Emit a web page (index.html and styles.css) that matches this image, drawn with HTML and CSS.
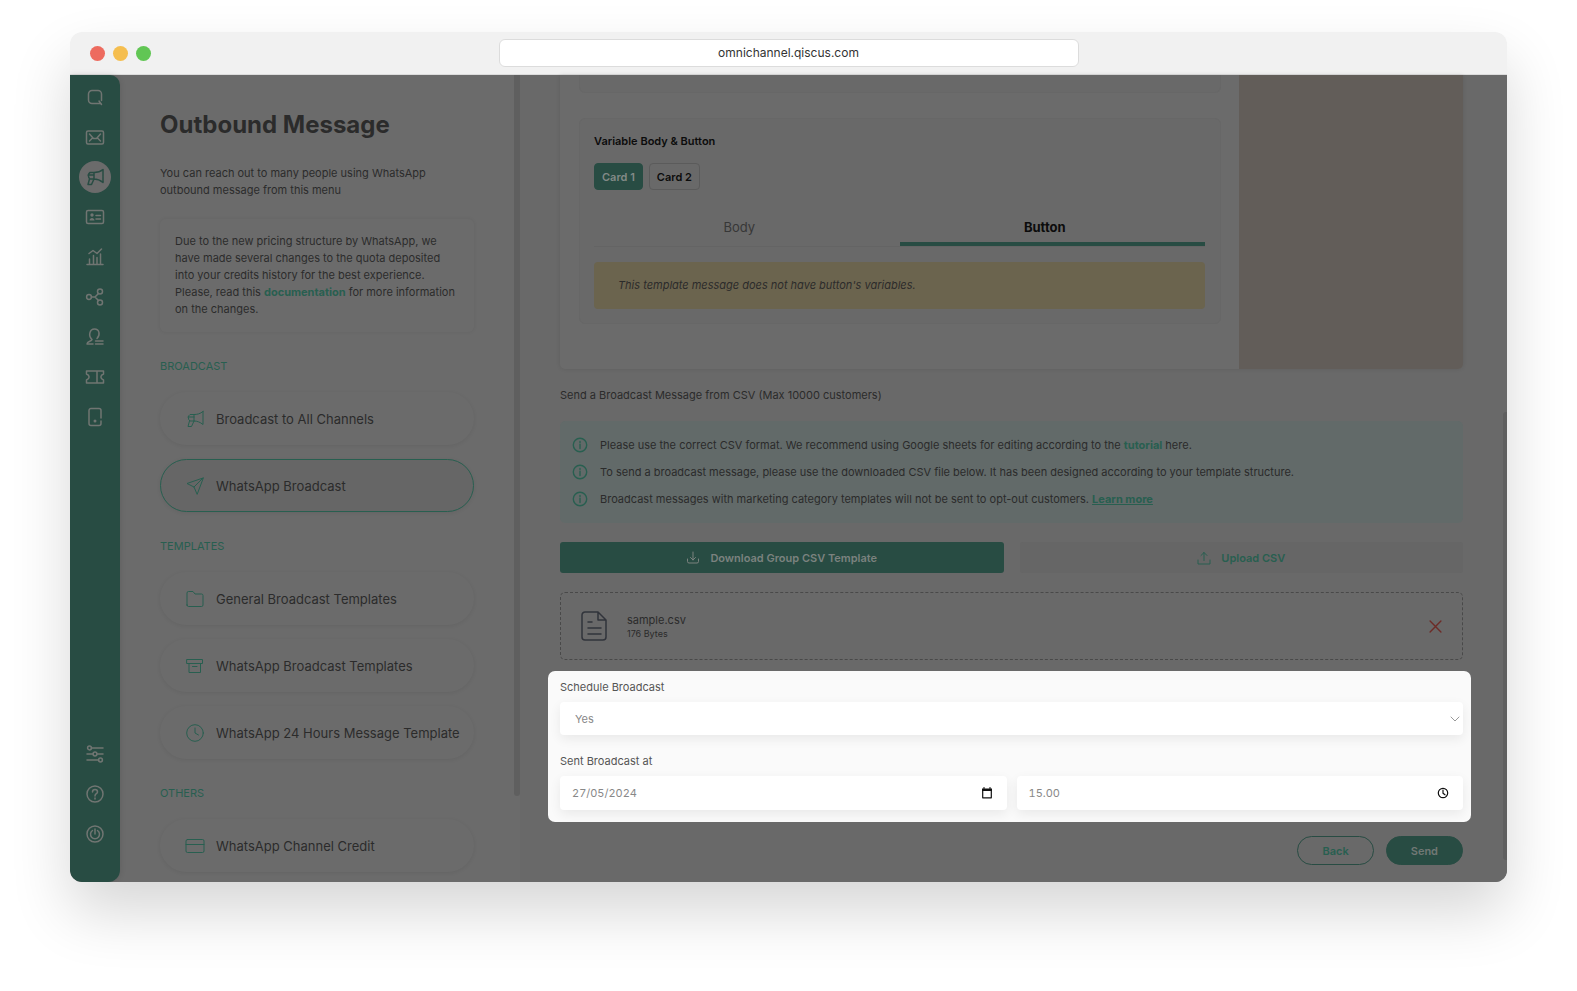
FILE: index.html
```html
<!DOCTYPE html>
<html lang="en">
<head>
    <meta charset="UTF-8">
    <meta name="viewport" content="width=device-width, initial-scale=1.0">
    <title>Outbound Message</title>
    <link rel="stylesheet" href="styles.css">
</head>
<body>
    <div class="window">
        <div class="titlebar">
            <div class="dots">
                <span class="dot red"></span>
                <span class="dot yellow"></span>
                <span class="dot green"></span>
            </div>
            <div class="address">omnichannel.qiscus.com</div>
        </div>

        <div class="app">
            <nav class="rail">
                <a href="#" aria-label="Home"><svg viewBox="0 0 20 20"><path d="M16 16.500H7A3.500 3.500 0 0 1 3.500 13V7A3.500 3.500 0 0 1 7 3.500H13A3.500 3.500 0 0 1 16.500 7V13.500M14 14L16.500 17.500"/></svg></a>
                <a href="#" aria-label="Inbox"><svg viewBox="0 0 20 20"><rect x="1.500" y="4" width="17" height="13" rx="1.500"/><path d="M4.500 7L8.500 11.500H11.500L15.500 7M4.500 14L7.500 11M15.500 14L12.500 11"/></svg></a>
                <a href="#" class="active" aria-label="Outbound message"><svg viewBox="0 0 20 20"><path d="M18 2.500V15.500C15 13 12 12 9 12H5A2.500 3.500 0 0 1 5 5.500H9C12 5.500 15 5 18 2.500ZM9 5.500V12M4.500 12L3 17.500H6.500L9 12M3 8H9"/></svg></a>
                <a href="#" aria-label="Contacts"><svg viewBox="0 0 20 20"><rect x="1.500" y="3.500" width="17" height="13" rx="1.500"/><path d="M11 8.500H15.500M11 12H15.500"/><circle class="solid" cx="7" cy="8" r="1.700"/><path class="solid" d="M4.500 13.500C4.500 10 9.500 10 9.500 13.500Z"/></svg></a>
                <a href="#" aria-label="Analytics"><svg viewBox="0 0 20 20"><path d="M2 17.500H18M4.500 17V12M8.500 17V8.500M12 17V10.500M15.500 17V7M4 6.500L8 3.500L12 6.500L16.500 2"/></svg></a>
                <a href="#" aria-label="Integration"><svg viewBox="0 0 20 20"><circle cx="4" cy="10" r="2.400"/><circle cx="15" cy="4.500" r="2.500"/><circle cx="15" cy="15.500" r="2.500"/><path d="M6.500 10H10L13.500 6.500M10 10L13.500 13.500"/></svg></a>
                <a href="#" aria-label="Agents"><svg viewBox="0 0 20 20"><path d="M8 17H2C2 14 6.500 14.500 7 12.500C3 9 4.500 2 9.500 2S15.500 8 12 11.500M10.500 14H18M10.500 17H18"/></svg></a>
                <a href="#" aria-label="Tickets"><svg viewBox="0 0 20 20"><path d="M1.500 4H18.500V7C15 8.500 15 11.500 18.500 13V16H1.500V13C5 11.500 5 8.500 1.500 7ZM12 4V16"/></svg></a>
                <a href="#" aria-label="Devices"><svg viewBox="0 0 20 20"><path d="M16 11V3.500A2 2 0 0 0 14 1.500H6A2 2 0 0 0 4 3.500V16.500A2 2 0 0 0 6 18.500H14A2 2 0 0 0 16 16.500V14"/><circle class="solid" cx="10" cy="14" r="1.500"/></svg></a>
                <a href="#" class="first-bottom" aria-label="Settings"><svg viewBox="0 0 20 20"><path d="M6.500 4H18M2 10H8M12 10H18M2 16H13.500"/><circle cx="4.500" cy="4" r="1.900"/><circle cx="10" cy="10" r="1.900"/><circle cx="15.500" cy="16" r="1.900"/></svg></a>
                <a href="#" aria-label="Help"><svg viewBox="0 0 20 20"><circle cx="10" cy="10" r="8"/><path d="M7.500 8C7.500 4.800 12.500 4.800 12.500 8C12.500 10 10 9.500 10 12M10 14V15"/></svg></a>
                <a href="#" aria-label="Log out"><svg viewBox="0 0 20 20"><circle cx="10" cy="10" r="8"/><path d="M7.500 6.500A4.500 4.500 0 1 0 12.500 6.500M10 5V10"/></svg></a>
            </nav>

            <aside class="sidebar">
                <h1>Outbound Message</h1>
                <p class="intro">You can reach out to many people using WhatsApp outbound message from this menu</p>
                <div class="notice">Due to the new pricing structure by WhatsApp, we have made several changes to the quota deposited into your credits history for the best experience. Please, read this <a href="#">documentation</a> for more information on the changes.</div>

                <h2>BROADCAST</h2>
                <div class="menu">
                    <a href="#"><svg viewBox="0 0 20 20"><path d="M18 2.500V15.500C15 13 12 12 9 12H5A2.500 3.500 0 0 1 5 5.500H9C12 5.500 15 5 18 2.500ZM9 5.500V12M4.500 12L3 17.500H6.500L9 12M3 8H9"/></svg>Broadcast to All Channels</a>
                    <a href="#" class="selected"><svg viewBox="0 0 20 20"><path d="M18 2L2 7.500L9 11L12 18ZM18 2L9 11"/></svg>WhatsApp Broadcast</a>
                </div>

                <h2>TEMPLATES</h2>
                <div class="menu">
                    <a href="#"><svg viewBox="0 0 20 20"><path d="M2 16V4A1.500 1.500 0 0 1 3.500 2.500H8L10 5H16.500A1.500 1.500 0 0 1 18 6.500V16A1.500 1.500 0 0 1 16.500 17.500H3.500A1.500 1.500 0 0 1 2 16Z"/></svg>General Broadcast Templates</a>
                    <a href="#"><svg viewBox="0 0 20 20"><path d="M2 3.500H17.500V7.500H2ZM4 7.500V16.500H15.500V7.500M7.500 10.500H12"/></svg>WhatsApp Broadcast Templates</a>
                    <a href="#"><svg viewBox="0 0 20 20"><circle cx="10" cy="10" r="8.300"/><path d="M10 5V10L13.500 12"/></svg>WhatsApp 24 Hours Message Template</a>
                </div>

                <h2>OTHERS</h2>
                <div class="menu">
                    <a href="#"><svg viewBox="0 0 20 20"><rect x="1" y="3.500" width="18" height="13" rx="1.500"/><path d="M1 8.500H19"/></svg>WhatsApp Channel Credit</a>
                </div>
                <span class="scroll-thumb"></span>
            </aside>

            <main class="main">
                <div class="template-card">
                    <div class="template-form">
                        <div class="panel-end"></div>
                        <div class="panel">
                            <h3>Variable Body &amp; Button</h3>
                            <div class="cards">
                                <button type="button" class="current">Card 1</button>
                                <button type="button">Card 2</button>
                            </div>
                            <div class="tabs">
                                <button type="button">Body</button>
                                <button type="button" class="current">Button</button>
                            </div>
                            <div class="warning">This template message does not have button's variables.</div>
                        </div>
                    </div>
                    <div class="preview"></div>
                </div>

                <p class="csv-title">Send a Broadcast Message from CSV (Max 10000 customers)</p>

                <ul class="tips">
                    <li><svg viewBox="0 0 16 16"><circle cx="8" cy="8" r="6.700"/><path d="M8 7.300V11.500M8 4.500V5.500"/></svg><span>Please use the correct CSV format. We recommend using Google sheets for editing according to the <a href="#">tutorial</a> here.</span></li>
                    <li><svg viewBox="0 0 16 16"><circle cx="8" cy="8" r="6.700"/><path d="M8 7.300V11.500M8 4.500V5.500"/></svg><span>To send a broadcast message, please use the downloaded CSV file below. It has been designed according to your template structure.</span></li>
                    <li><svg viewBox="0 0 16 16"><circle cx="8" cy="8" r="6.700"/><path d="M8 7.300V11.500M8 4.500V5.500"/></svg><span>Broadcast messages with marketing category templates will not be sent to opt-out customers. <a href="#" class="underlined">Learn more</a></span></li>
                </ul>

                <div class="csv-actions">
                    <button type="button" class="download"><svg viewBox="0 0 14 14"><path d="M1.500 8V10.500A1.500 1.500 0 0 0 3 12H11A1.500 1.500 0 0 0 12.500 10.500V8M7 1V9M4.500 6.500L7 9L9.500 6.500"/></svg>Download Group CSV Template</button>
                    <button type="button" class="upload"><svg viewBox="0 0 14 14"><path d="M1 9V13H13V9M7 9.500V1.500M4 4.500L7 1.500L10 4.500"/></svg>Upload CSV</button>
                </div>

                <div class="file">
                    <svg class="file-icon" viewBox="0 0 26 32"><path d="M17 2H4A3 3 0 0 0 1 5V27A3 3 0 0 0 4 30H22A3 3 0 0 0 25 27V10ZM17 2V10H25M7 12H11M7 18H20M7 24H20"/></svg>
                    <div class="file-info">
                        <div class="file-name">sample.csv</div>
                        <div class="file-size">176 Bytes</div>
                    </div>
                    <button type="button" class="remove" aria-label="Remove file"><svg viewBox="0 0 12 12"><path d="M1 1L11 11M11 1L1 11"/></svg></button>
                </div>

                <form class="schedule">
                    <label for="schedule">Schedule Broadcast</label>
                    <div class="field">
                        <select id="schedule">
                            <option>Yes</option>
                            <option>No</option>
                        </select>
                        <svg class="chevron" viewBox="0 0 10 10"><path d="M1 3L5 7L9 3"/></svg>
                    </div>
                    <label for="send-date">Sent Broadcast at</label>
                    <div class="date-row">
                        <div class="field">
                            <input type="text" id="send-date" value="27/05/2024">
                            <svg class="picker" viewBox="0 0 12 12"><path d="M1.700 2.500H10.300V10.800H1.700Z"/><path class="solid" d="M1 1.500H2.500V0H3.500V1.500H8.500V0H9.500V1.500H11V4H1Z"/></svg>
                        </div>
                        <div class="field">
                            <input type="text" id="send-time" aria-label="Time" value="15.00">
                            <svg class="picker" viewBox="0 0 12 12"><circle cx="6" cy="6" r="4.700"/><path d="M6 3V6.300L8 7.800"/></svg>
                        </div>
                    </div>
                </form>

                <div class="footer">
                    <button type="button" class="back">Back</button>
                    <button type="button" class="send">Send</button>
                </div>
                <span class="scroll-thumb"></span>
            </main>
        </div>
    </div>
</body>
</html>
```

FILE: styles.css
```css
* {
    box-sizing: border-box;
}

body {
    margin: 0;
    padding: 32px 70px 100px;
    background-color: #fff;
    color: #2b2b2b;
    font-family: Inter, "Liberation Sans", sans-serif;
    font-size: 11px;
    line-height: 16px;
}

h1, h2, h3, p, ul {
    margin: 0;
    padding: 0;
}

a {
    color: #285f50;
    text-decoration: none;
}

button, input, select {
    font: inherit;
    margin: 0;
}

button {
    cursor: pointer;
}

svg {
    display: block;
    flex-shrink: 0;
    fill: none;
    stroke: currentColor;
    stroke-linecap: round;
    stroke-linejoin: round;
}

svg .solid {
    fill: currentColor;
    stroke: none;
}

.window {
    border-radius: 12px;
    overflow: hidden;
    box-shadow: 0 30px 60px rgba(0, 0, 0, 0.16);
}

/* browser bar */
.titlebar {
    display: grid;
    grid-template-columns: 1fr 580px 1fr;
    align-items: center;
    height: 43px;
    background-color: #f1f1f1;
    border-bottom: 1px solid #dcdcdc;
}

.dots {
    display: flex;
    gap: 8px;
    padding-left: 20px;
}

.dot {
    width: 15px;
    height: 15px;
    border-radius: 50%;
}

.red {
    background-color: #ed6b5f;
}

.yellow {
    background-color: #f5be4f;
}

.green {
    background-color: #61c654;
}

.address {
    height: 28px;
    font-size: 12px;
    line-height: 26px;
    background-color: #fff;
    border: 1px solid #dcdcdc;
    border-radius: 6px;
    text-align: center;
    color: #333;
}

.app {
    display: flex;
    background-color: #6b6b6b;
}

/* icon rail */
.rail {
    display: flex;
    flex-direction: column;
    align-items: center;
    gap: 8px;
    width: 50px;
    padding: 6px 0 32px;
    background-color: #284c43;
    border-radius: 0 10px 12px 12px;
    box-shadow: 0 0 6px rgba(0, 0, 0, 0.12);
}

.rail a {
    display: flex;
    align-items: center;
    justify-content: center;
    width: 32px;
    height: 32px;
    border-radius: 50%;
    color: #707572;
}

.rail .active {
    background-color: #6b6b6b;
    color: #284c43;
}

.rail .first-bottom {
    margin-top: auto;
}

.rail svg {
    width: 20px;
    height: 20px;
    stroke-width: 1.5;
}

/* left menu */
.sidebar {
    position: relative;
    width: 400px;
    padding: 34px 46px 10px 40px;
}

.sidebar h1 {
    font-size: 24px;
    line-height: 32px;
    font-weight: 700;
}

.intro {
    margin: 24px 0 20px;
    line-height: 17px;
}

.notice {
    padding: 14px 14px 14px 15px;
    line-height: 17px;
    border-radius: 6px;
    box-shadow: 0 0 4px rgba(0, 0, 0, 0.07);
}

.notice a, .tips a {
    font-weight: 700;
}

.sidebar h2 {
    margin: 26px 0 18px;
    font-size: 11px;
    line-height: 16px;
    font-weight: 400;
    color: #285f50;
}

.menu {
    display: flex;
    flex-direction: column;
    gap: 14px;
}

.menu a {
    display: flex;
    align-items: center;
    gap: 11px;
    height: 53px;
    padding-left: 24px;
    border: 1px solid transparent;
    border-radius: 27px;
    box-shadow: 0 1px 4px rgba(0, 0, 0, 0.07);
    font-size: 13px;
    color: #2b2b2b;
}

.menu .selected {
    background-color: #666;
    border-color: #285f50;
}

.menu svg {
    width: 20px;
    height: 20px;
    color: #285f50;
}

.scroll-thumb {
    position: absolute;
    background-color: #5f5f5f;
}

.sidebar .scroll-thumb {
    top: 0;
    right: 0;
    bottom: 86px;
    width: 6px;
    border-radius: 0 0 3px 3px;
}

/* content */
.main {
    position: relative;
    flex: 1;
    min-width: 0;
    padding: 0 44px 17px 40px;
    background-color: #696969;
}

.main .scroll-thumb {
    top: 337px;
    right: 0;
    bottom: 22px;
    width: 4px;
    border-radius: 3px 0 0 3px;
}

.template-card {
    display: flex;
    border-radius: 0 0 5px 5px;
    overflow: hidden;
    background-color: #6b6b6b;
    box-shadow: 0 0 4px rgba(0, 0, 0, 0.1);
}

.template-form {
    flex: 1;
    padding: 0 18px 45px 19px;
}

.preview {
    width: 224px;
    background-color: #625d59;
}

.panel-end {
    height: 18px;
    margin-bottom: 25px;
    background-color: #696969;
    border: 1px solid #676767;
    border-top: none;
    border-radius: 0 0 6px 6px;
}

.panel {
    padding: 14px 15px 14px 14px;
    background-color: #696969;
    border: 1px solid #676767;
    border-radius: 6px;
}

.panel h3 {
    font-size: 11px;
    line-height: 16px;
    font-weight: 600;
    color: #0c0c0c;
}

.cards {
    display: flex;
    gap: 6px;
    margin: 14px 0 18px;
}

.cards button {
    height: 27px;
    padding: 0 7px;
    background-color: transparent;
    border: 1px solid #5b5b5b;
    border-radius: 4px;
    font-weight: 600;
    color: #0c0c0c;
}

.cards .current {
    background-color: #284c43;
    border-color: #284c43;
    color: #838a87;
}

.tabs {
    display: flex;
    border-bottom: 1px solid #646464;
}

.tabs button {
    flex: 1;
    height: 38px;
    padding: 0 15px 0 0;
    background: none;
    border: none;
    font-size: 13px;
    color: #373737;
}

.tabs .current {
    background: linear-gradient(#284c43, #284c43) bottom / 100% 4px no-repeat;
    border-radius: 3px 3px 0 0;
    font-weight: 700;
    color: #0c0c0c;
}

.warning {
    margin-top: 15px;
    padding: 15px 24px 16px;
    background-color: #6b644e;
    border-radius: 4px;
    font-style: italic;
}

.csv-title {
    margin: 18px 0;
}

.tips {
    display: flex;
    flex-direction: column;
    gap: 11px;
    padding: 16px 12px;
    background-color: #626a69;
    border-radius: 5px;
    list-style: none;
}

.tips li {
    display: flex;
    gap: 12px;
}

.tips svg {
    width: 16px;
    height: 16px;
    stroke-width: 1.4;
    color: #285f50;
}

.tips .underlined {
    text-decoration: underline;
}

.csv-actions {
    display: grid;
    grid-template-columns: 1fr 1fr;
    gap: 16px;
    margin: 19px 0;
}

.csv-actions button {
    display: flex;
    align-items: center;
    justify-content: center;
    gap: 10px;
    height: 31px;
    border: none;
    border-radius: 3px;
    font-weight: 600;
}

.csv-actions svg {
    width: 14px;
    height: 14px;
}

.csv-actions .download {
    background-color: #284c43;
    color: #7b827f;
}

.csv-actions .upload {
    background-color: #666;
    color: #285f50;
}

.file {
    display: flex;
    align-items: center;
    height: 68px;
    padding: 0 20px;
    border: 1px dashed #494949;
    border-radius: 5px;
}

.file-icon {
    width: 26px;
    height: 32px;
    stroke-width: 1.5;
    color: #31343b;
}

.file-info {
    flex: 1;
    margin-left: 20px;
}

.file-size {
    font-size: 9px;
    line-height: 12px;
}

.remove {
    padding: 0;
    background: none;
    border: none;
    color: #6d2b27;
}

.remove svg {
    width: 13px;
    height: 13px;
    stroke-width: 1.3;
}

/* highlighted form */
.schedule {
    margin: 11px -8px 14px -12px;
    padding: 8px 8px 12px 12px;
    background-color: #fafafa;
    border-radius: 7px;
    color: #555;
    overflow: hidden;
}

.schedule label {
    display: block;
    margin-bottom: 7px;
}

.field {
    position: relative;
}

.field input, .field select {
    display: block;
    width: 100%;
    height: 34px;
    padding: 0 12px;
    background-color: #fff;
    border: none;
    border-radius: 4px;
    box-shadow: 0 4px 12px rgba(0, 0, 0, 0.07);
    color: #888;
    appearance: none;
    outline: none;
}

.field select {
    height: 33px;
    padding-left: 15px;
    margin-bottom: 18px;
}

.field input {
    font-variant-numeric: tabular-nums;
}

.chevron {
    position: absolute;
    top: 12px;
    right: 3px;
    width: 10px;
    height: 10px;
    color: #999;
}

.picker {
    position: absolute;
    top: 11px;
    right: 14px;
    width: 12px;
    height: 12px;
    stroke-width: 1.2;
    color: #111;
}

.date-row {
    display: grid;
    grid-template-columns: 1fr 1fr;
    gap: 10px;
}

.footer {
    display: flex;
    justify-content: flex-end;
    gap: 12px;
}

.footer button {
    height: 29px;
    padding: 0 24px;
    border: 1px solid #284c43;
    border-radius: 15px;
    font-weight: 600;
}

.back {
    background: none;
    color: #285f50;
}

.send {
    background-color: #284c43;
    color: #717875;
}
```
